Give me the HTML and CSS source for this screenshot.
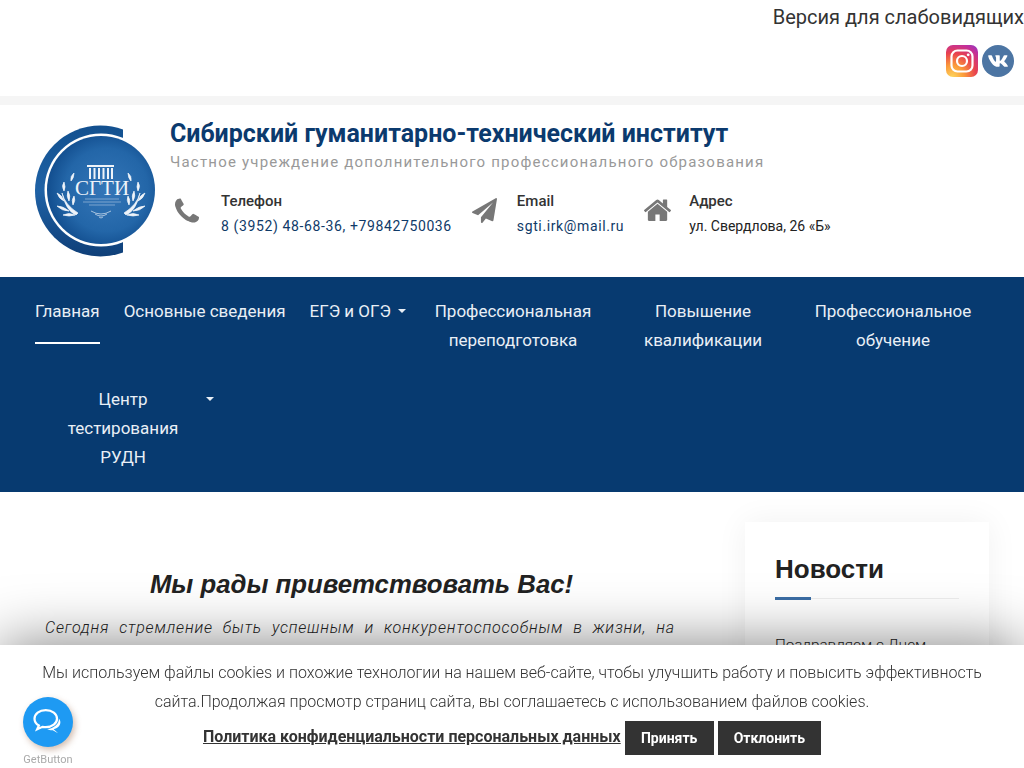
FILE: index.html
```html
<!DOCTYPE html>
<html lang="ru">
  <head>
    <meta charset="UTF-8" />
    <meta name="viewport" content="width=device-width, initial-scale=1.0" />
    <title>Сибирский гуманитарно-технический институт</title>
    <link rel="stylesheet" href="styles.css">
  </head>
  <body>
    <div class="topbar">
      <a class="eye-link" href="#">Версия для слабовидящих</a>
      <div class="socials">
        <svg class="social" viewBox="0 0 32 32" aria-label="Instagram">
          <defs>
            <radialGradient id="igGrad" cx="0.2" cy="1" r="1.25">
              <stop offset="0" stop-color="#fdd55d" />
              <stop offset="0.3" stop-color="#fb9a3a" />
              <stop offset="0.6" stop-color="#e8414f" />
              <stop offset="0.85" stop-color="#c22f9c" />
              <stop offset="1" stop-color="#8d3ac4" />
            </radialGradient>
          </defs>
          <rect width="32" height="32" rx="7" fill="url(#igGrad)" />
          <rect x="5.5" y="5.5" width="21" height="21" rx="6" fill="none" stroke="#fff" stroke-width="2.2" />
          <circle cx="16" cy="16" r="5" fill="none" stroke="#fff" stroke-width="2.2" />
          <circle cx="22.2" cy="9.8" r="1.4" fill="#fff" />
        </svg>
        <svg class="social" viewBox="0 0 32 32" aria-label="VK">
          <circle cx="16" cy="16" r="16" fill="#4c75a3" />
          <svg x="5.5" y="5.5" width="21" height="21" viewBox="0 0 576 576">
            <path fill="#fff" transform="translate(0 32)" d="M545 117.7c3.7-12.5 0-21.7-17.8-21.7h-58.9c-15 0-21.9 7.9-25.6 18.9 0 0-29.4 72.1-71 118.2-13.4 13.4-19.5 17.7-26.8 17.7-3.7 0-9.2-4.3-9.2-16.8V117.7c0-15-4.2-21.7-16.6-21.7h-92.6c-9.4 0-15 7-15 13.5 0 14.2 21.2 17.5 23.4 57.5v86.8c0 19-3.4 22.5-10.9 22.5-20 0-68.6-73.4-97.4-157.4-5.8-16.3-11.5-22.9-26.6-22.9H38.8c-16.8 0-20.2 7.9-20.2 16.7 0 15.6 20 93.1 93 195.5C160.3 376.1 229 416 291.4 416c37.5 0 42.1-8.4 42.1-22.9 0-66.8-3.4-73.1 15.4-73.1 8.7 0 23.7 4.4 58.7 38.1 40 40 46.6 57.9 69 57.9h58.9c16.8 0 25.3-8.4 20.4-25-11.2-34.9-86.9-106.7-90.3-111.5-8.7-11.2-6.2-16.2 0-26.2.1-.1 72-101.3 79.4-135.6z" />
          </svg>
        </svg>
      </div>
    </div>

    <div class="strip"></div>

    <div class="header">
      <svg class="logo" viewBox="0 0 120 132" aria-label="СГТИ">
        <defs>
          <linearGradient id="ringGrad" x1="0" y1="0" x2="0" y2="1">
            <stop offset="0" stop-color="#12508f" />
            <stop offset="0.5" stop-color="#1f62a6" />
            <stop offset="1" stop-color="#0f3f78" />
          </linearGradient>
          <radialGradient id="discGrad" cx="0.55" cy="0.5" r="0.55">
            <stop offset="0" stop-color="#3476b8" />
            <stop offset="0.7" stop-color="#2366a8" />
            <stop offset="1" stop-color="#124e8f" />
          </radialGradient>
          <clipPath id="ringClip"><rect width="88" height="132" /></clipPath>
        </defs>
        <circle cx="65.5" cy="66" r="65.5" fill="url(#ringGrad)" clip-path="url(#ringClip)" />
        <circle cx="66" cy="65" r="56.500" fill="#fff" />
        <circle cx="66" cy="65" r="54" fill="url(#discGrad)" />
        <g fill="#eef3f9" transform="translate(0 7)">
          <path d="M52 33h27v2H52z" />
          <path d="M54 36h2v11h-2zM58.500 36h2v11h-2zM63 36h2v11h-2zM67.500 36h2v11h-2zM72 36h2v11h-2zM76 36h2v11h-2z" />
          <text class="logo-text" x="67" y="63" text-anchor="middle">СГТИ</text>
        </g>
        <g fill="none" stroke="#eef3f9" stroke-width="0.6" opacity="0.7">
          <path d="M50 74h34M48 77h38M54 80h26" />
        </g>
        <path d="M56 86q10 6 20 0M60 89q6 4 12 0M64 92q2 2 4 0" fill="none" stroke="#dbe7f3" stroke-width="0.7" />
        <g fill="#eef3f9" stroke="#eef3f9" stroke-width="0.7" transform="translate(0 14)">
          <path d="M41 76q-10-4-14-22 3 12 16 20z" />
          <path d="M34 72q-7 0-12-5 6 0 12 5zM29 62q-5-2-7-8 5 2 7 8zM29 52q2-4 0-9-3 4 0 9zM36 42q3-3 3-8-4 3-3 8zM34 62q2-5-1-10-2 5 1 10zM40 76q-6 2-12 0 6-3 12 0zM38 66q3-5 1-9-3 4-1 9z" />
          <path d="M91 76q10-4 14-22-3 12-16 20z" />
          <path d="M98 72q7 0 12-5-6 0-12 5zM103 62q5-2 7-8-5 2-7 8zM103 52q-2-4 0-9 3 4 0 9zM96 42q-3-3-3-8 4 3 3 8zM98 62q-2-5 1-10 2 5-1 10zM92 76q6 2 12 0-6-3-12 0zM94 66q-3-5-1-9 3 4 1 9z" />
        </g>
      </svg>
      <div class="header-info">
        <div class="site-title">Сибирский гуманитарно-технический институт</div>
        <div class="site-sub">Частное учреждение дополнительного профессионального образования</div>
        <div class="contacts">
          <div class="contact">
            <svg class="contact-icon phone" viewBox="0 0 1408 1408"><path d="M1408 1112q0 27-10 70.5t-21 68.5q-21 50-122 106-94 51-186 51-27 0-53-3.5t-57.5-12.5-47-14.5-55.5-20.5-49-18q-98-35-175-83-127-79-264-216t-216-264q-48-77-83-175-3-9-18-49t-20.5-55.5-14.5-47-12.5-57.5-3.5-53q0-92 51-186 56-101 106-122 25-11 68.5-21t70.5-10q14 0 21 3 18 6 53 76 11 19 30 54t35 63.5 31 53.5q3 4 17.5 25t21.5 35.5 7 28.5q0 20-28.5 50t-62 55-62 53-28.5 46q0 9 5 22.5t8.5 20.5 14 24 11.5 19q76 137 174 235t235 174q2 1 19 11.5t24 14 20.5 8.5 22.5 5q18 0 46-28.5t53-62 55-62 50-28.5q14 0 28.5 7t35.5 21.5 25 17.5q25 15 53.5 31t63.5 35 54 30q70 35 76 53 3 7 3 21z" /></svg>
            <div>
              <div class="contact-label">Телефон</div>
              <div class="contact-value">8 (3952) 48-68-36, +79842750036</div>
            </div>
          </div>
          <div class="contact">
            <svg class="contact-icon" viewBox="0 0 1792 1792"><path d="M1764 11q33 24 27 64l-256 1536q-5 29-32 45-14 8-31 8-11 0-24-5l-453-185-242 295q-18 23-49 23-13 0-22-4-19-7-30.5-23.5t-11.5-36.5v-349l864-1059-1069 925-395-162q-37-14-40-55-2-40 32-59l1664-960q15-9 32-9 20 0 36 11z" /></svg>
            <div>
              <div class="contact-label">Email</div>
              <div class="contact-value">sgti.irk@mail.ru</div>
            </div>
          </div>
          <div class="contact">
            <svg class="contact-icon home" viewBox="90 220 1610 1320" preserveAspectRatio="none"><path d="M1472 992v480q0 26-19 45t-45 19h-384v-384h-256v384h-384q-26 0-45-19t-19-45v-480q0-1 .5-3t.5-3l575-474 575 474q1 2 1 6zm223-69l-62 74q-8 9-21 11h-3q-13 0-21-7l-692-577-692 577q-12 8-24 7-13-2-21-11l-62-74q-8-10-7-23.5t11-21.5l719-599q32-26 76-26t76 26l244 204v-195q0-14 9-23t23-9h192q14 0 23 9t9 23v408l219 182q10 8 11 21.5t-7 23.5z" /></svg>
            <div>
              <div class="contact-label">Адрес</div>
              <div class="contact-value plain">ул. Свердлова, 26 «Б»</div>
            </div>
          </div>
        </div>
      </div>
    </div>

    <div class="nav">
      <a class="nav-item active" href="#">Главная</a>
      <a class="nav-item" href="#">Основные сведения</a>
      <a class="nav-item has-caret" href="#">ЕГЭ и ОГЭ</a>
      <a class="nav-item wide" href="#">Профессиональная переподготовка</a>
      <a class="nav-item wide" href="#">Повышение квалификации</a>
      <a class="nav-item wide" href="#">Профессиональное обучение</a>
      <a class="nav-item center-item" href="#">Центр<br />тестирования<br />РУДН</a>
    </div>

    <div class="main">
      <div class="content">
        <h1>Мы рады приветствовать Вас!</h1>
        <p>Сегодня стремление быть успешным и конкурентоспособным в жизни, на современном рынке труда требует постоянного повышения своей квалификации и получения новых знаний.</p>
      </div>
      <div class="sidebar">
        <h2>Новости</h2>
        <div class="news-item">Поздравляем с Днем</div>
      </div>
    </div>

    <div class="cookie">
      <div class="cookie-text">Мы используем файлы cookies и похожие технологии на нашем веб-сайте, чтобы улучшить работу и повысить эффективность сайта.Продолжая просмотр страниц сайта, вы соглашаетесь с использованием файлов cookies.</div>
      <div class="cookie-actions">
        <a class="cookie-link" href="#">Политика конфиденциальности персональных данных</a>
        <button class="cookie-btn accept">Принять</button>
        <button class="cookie-btn">Отклонить</button>
      </div>
    </div>

    <div class="getbutton">
      <div class="getbutton-circle">
        <svg viewBox="0 0 32 32" width="36" height="36">
          <path d="M21 22.500c3.500-.8 6-3.200 6-6.200 0-1.300-.5-2.500-1.300-3.500.2 5-4.200 8.700-10.500 9.400 1.400.9 3.200 1.300 5 1.200l4.800 2.600z" fill="#fff" />
          <path d="M14 5.500c-5.800 0-10 3.400-10 7.600 0 2.600 1.500 4.700 3.900 6l-1.500 3.400 4.700-2.200c.9.200 1.900.3 2.900.3 5.800 0 10-3.400 10-7.500s-4.200-7.600-10-7.600z" fill="none" stroke="#fff" stroke-width="2" />
        </svg>
      </div>
      <div class="getbutton-label">GetButton</div>
    </div>
  </body>
</html>
```

FILE: styles.css
```css
body {
  font-family: Roboto, "Liberation Sans", sans-serif;
  margin: 0;
  padding: 0;
  background-color: #fff;
  color: #222;
}

a {
  text-decoration: none;
  color: inherit;
}

.topbar {
  height: 96px;
  display: flex;
  flex-direction: column;
  align-items: flex-end;
  box-sizing: border-box;
  padding-top: 5px;
}

.eye-link {
  font-size: 20px;
  line-height: 24px;
  color: #333;
}

.socials {
  display: flex;
  gap: 4px;
  margin-top: 16px;
  margin-right: 10px;
}

.social {
  width: 32px;
  height: 32px;
}

.strip {
  height: 9px;
  background-color: #f5f5f5;
}

.header {
  display: flex;
  height: 172px;
  box-sizing: border-box;
  padding: 20px 0 0 35px;
}

.logo {
  width: 120px;
  height: 132px;
  flex-shrink: 0;
}

.logo-text {
  font-family: "Liberation Serif", serif;
  font-size: 21px;
  stroke: none;
}

.header-info {
  margin-left: 15px;
}

.site-title {
  font-size: 25px;
  font-weight: 700;
  line-height: 30px;
  margin-top: -6px;
  color: #0b3a6e;
}

.site-sub {
  font-size: 15px;
  line-height: 20px;
  margin-top: 3px;
  letter-spacing: 1.2px;
  color: #999;
}

.contacts {
  display: flex;
  gap: 20px;
  margin-top: 19px;
  padding-left: 5px;
}

.contact {
  display: flex;
}

.contact-icon {
  width: 25px;
  height: 25px;
  margin: 7px 20px 0 0;
  fill: #777;
  flex-shrink: 0;
}

.contact-icon.phone {
  width: 24px;
  margin-right: 22px;
}

.contact-icon.home {
  width: 27px;
  height: 22px;
  margin: 8px 18px 0 0;
}

.contact-label {
  font-size: 15px;
  font-weight: 500;
  line-height: 20px;
  color: #333;
}

.contact-value {
  font-size: 14px;
  line-height: 20px;
  margin-top: 5px;
  letter-spacing: 0.62px;
  color: #0f3a68;
}

.contact-value.plain {
  letter-spacing: 0;
  color: #222;
}

.nav {
  display: flex;
  flex-wrap: wrap;
  align-items: flex-start;
  gap: 30px 24px;
  padding: 20px 35px 20px;
  background-color: #073a70;
}

.nav-item {
  display: block;
  position: relative;
  font-size: 17px;
  line-height: 29px;
  color: #e9eff6;
}

.nav-item.active {
  padding-bottom: 16px;
  border-bottom: 2px solid #fff;
}

.nav-item.has-caret {
  padding-right: 15px;
}

.nav-item.wide {
  width: 166px;
  text-align: center;
}

.nav-item.center-item {
  width: 176px;
  text-align: center;
}

.has-caret::after,
.center-item::after {
  content: "";
  position: absolute;
  right: 0;
  top: 12px;
  border-top: 4px solid #e9eff6;
  border-left: 4.5px solid transparent;
  border-right: 4.5px solid transparent;
}

.center-item::after {
  right: -3px;
}

.main {
  display: flex;
  align-items: flex-start;
  padding: 30px 35px 0 45px;
}

.content {
  width: 630px;
  flex-shrink: 0;
  padding-top: 46px;
}

.content h1 {
  font-family: "Liberation Sans", Arial, sans-serif;
  font-size: 25.75px;
  font-style: italic;
  font-weight: 700;
  line-height: 32px;
  text-align: center;
  margin: 0 0 13px;
  padding-left: 3px;
}

.content p {
  font-size: 16px;
  font-style: italic;
  font-weight: 300;
  line-height: 29px;
  letter-spacing: 0.8px;
  text-align: justify;
  margin: 0;
}

.sidebar {
  width: 184px;
  margin-left: 70px;
  padding: 30px;
  background-color: #fff;
  box-shadow: 0 0 30px rgba(0, 0, 0, 0.06);
}

.sidebar h2 {
  font-family: "Liberation Sans", Arial, sans-serif;
  font-size: 26px;
  font-weight: 700;
  line-height: 34px;
  margin: 0;
  padding-bottom: 12px;
  border-bottom: 1px solid #eee;
  position: relative;
}

.sidebar h2::after {
  content: "";
  position: absolute;
  left: 0;
  bottom: -2px;
  width: 36px;
  height: 3px;
  background-color: #3b6ea5;
}

.news-item {
  margin-top: 37px;
  font-size: 15.3px;
  font-weight: 300;
}

.cookie {
  position: fixed;
  left: 0;
  right: 0;
  bottom: 0;
  height: 123px;
  box-sizing: border-box;
  padding: 14px 40px 0;
  background-color: #fff;
  box-shadow: 0 0 60px rgba(0, 0, 0, 0.5);
  text-align: center;
}

.cookie-text {
  font-size: 16px;
  font-weight: 300;
  line-height: 28.8px;
  color: #333;
}

.cookie-actions {
  display: flex;
  justify-content: center;
  align-items: flex-start;
  margin-top: 4.4px;
}

.cookie-link {
  font-size: 16px;
  font-weight: 700;
  line-height: 32px;
  text-decoration: underline;
  color: #333;
}

.cookie-btn {
  height: 34px;
  margin-left: 4px;
  padding: 0 16px;
  border: none;
  background-color: #333;
  color: #fff;
  font-family: Roboto, sans-serif;
  font-size: 14px;
  font-weight: 700;
}

.cookie-btn.accept {
  width: 89px;
  padding: 0;
}

.getbutton {
  position: fixed;
  left: 23px;
  top: 697px;
  width: 50px;
  text-align: center;
}

.getbutton-circle {
  width: 50px;
  height: 50px;
  border-radius: 50%;
  background-color: #1e9af3;
  box-shadow: 2px 3px 6px rgba(160, 110, 80, 0.45);
  display: flex;
  align-items: center;
  justify-content: center;
}

.getbutton-label {
  margin: 6px -6px 0;
  font-size: 11px;
  line-height: 13px;
  color: #aaa;
}
```
